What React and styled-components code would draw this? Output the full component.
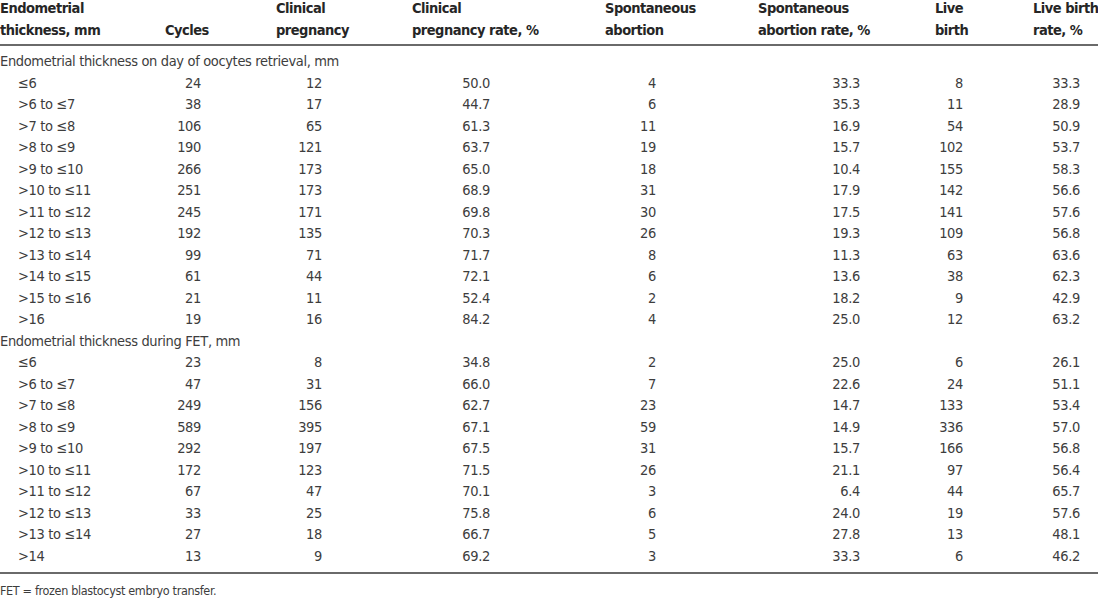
import React from "react";
import styled, { createGlobalStyle } from "styled-components";

const Global = createGlobalStyle`
  html, body { margin: 0; padding: 0; background: #fff; }
  body { font-family: "Liberation Sans Narrow", "DejaVu Sans Condensed", "Liberation Sans", sans-serif; overflow: hidden; }
`;

const COLS = "165px 111px 136px 193px 153px 177px 98px 65px";
const PADS = [75, 90, 115, 102, 75, 70, 18];

const Page = styled.div`
  width: 1098px;
  height: 600px;
  overflow: hidden;
`;

const Table = styled.div`
  margin-top: -3px;
  border-bottom: 2px solid #6a6a6a;
  padding-bottom: 5px;
`;

const HeadRow = styled.div`
  display: grid;
  grid-template-columns: ${COLS};
  align-items: end;
  border-bottom: 2px solid #6a6a6a;
  padding-bottom: 3px;
  margin-bottom: 5px;
`;

const HeadCell = styled.div`
  font-size: 14.5px;
  letter-spacing: -0.5px;
  font-weight: bold;
  line-height: 22px;
  color: #262626;
  white-space: nowrap;
`;

const Row = styled.div`
  display: grid;
  grid-template-columns: ${COLS};
  height: 21.5px;
  line-height: 21.5px;
  font-size: 14.5px;
  letter-spacing: -0.35px;
  color: #3d3d3d;
`;

const Section = styled.div`
  grid-column: 1 / -1;
  white-space: nowrap;
`;

const Label = styled.div`
  padding-left: 18px;
  white-space: nowrap;
`;

const Num = styled.div`
  text-align: right;
  padding-right: ${(p) => p.$pad}px;
  white-space: nowrap;
`;

const Note = styled.div`
  font-size: 12.5px;
  letter-spacing: -0.35px;
  color: #3d3d3d;
  margin-top: 9px;
  line-height: 16px;
`;

const headers = [
  ["Endometrial", "thickness, mm"],
  ["", "Cycles"],
  ["Clinical", "pregnancy"],
  ["Clinical", "pregnancy rate, %"],
  ["Spontaneous", "abortion"],
  ["Spontaneous", "abortion rate, %"],
  ["Live", "birth"],
  ["Live birth", "rate, %"],
];

const sections = [
  {
    title: "Endometrial thickness on day of oocytes retrieval, mm",
    rows: [
      ["≤6", 24, 12, "50.0", 4, "33.3", 8, "33.3"],
      [">6 to ≤7", 38, 17, "44.7", 6, "35.3", 11, "28.9"],
      [">7 to ≤8", 106, 65, "61.3", 11, "16.9", 54, "50.9"],
      [">8 to ≤9", 190, 121, "63.7", 19, "15.7", 102, "53.7"],
      [">9 to ≤10", 266, 173, "65.0", 18, "10.4", 155, "58.3"],
      [">10 to ≤11", 251, 173, "68.9", 31, "17.9", 142, "56.6"],
      [">11 to ≤12", 245, 171, "69.8", 30, "17.5", 141, "57.6"],
      [">12 to ≤13", 192, 135, "70.3", 26, "19.3", 109, "56.8"],
      [">13 to ≤14", 99, 71, "71.7", 8, "11.3", 63, "63.6"],
      [">14 to ≤15", 61, 44, "72.1", 6, "13.6", 38, "62.3"],
      [">15 to ≤16", 21, 11, "52.4", 2, "18.2", 9, "42.9"],
      [">16", 19, 16, "84.2", 4, "25.0", 12, "63.2"],
    ],
  },
  {
    title: "Endometrial thickness during FET, mm",
    rows: [
      ["≤6", 23, 8, "34.8", 2, "25.0", 6, "26.1"],
      [">6 to ≤7", 47, 31, "66.0", 7, "22.6", 24, "51.1"],
      [">7 to ≤8", 249, 156, "62.7", 23, "14.7", 133, "53.4"],
      [">8 to ≤9", 589, 395, "67.1", 59, "14.9", 336, "57.0"],
      [">9 to ≤10", 292, 197, "67.5", 31, "15.7", 166, "56.8"],
      [">10 to ≤11", 172, 123, "71.5", 26, "21.1", 97, "56.4"],
      [">11 to ≤12", 67, 47, "70.1", 3, "6.4", 44, "65.7"],
      [">12 to ≤13", 33, 25, "75.8", 6, "24.0", 19, "57.6"],
      [">13 to ≤14", 27, 18, "66.7", 5, "27.8", 13, "48.1"],
      [">14", 13, 9, "69.2", 3, "33.3", 6, "46.2"],
    ],
  },
];

export default function App() {
  return (
    <Page>
      <Global />
      <Table>
        <HeadRow>
          {headers.map((h, i) => (
            <HeadCell key={i}>
              {h[0] && <div>{h[0]}</div>}
              <div>{h[1]}</div>
            </HeadCell>
          ))}
        </HeadRow>
        {sections.map((s) => (
          <React.Fragment key={s.title}>
            <Row>
              <Section>{s.title}</Section>
            </Row>
            {s.rows.map((r) => (
              <Row key={r[0]}>
                <Label>{r[0]}</Label>
                {r.slice(1).map((v, j) => (
                  <Num key={j} $pad={PADS[j]}>
                    {v}
                  </Num>
                ))}
              </Row>
            ))}
          </React.Fragment>
        ))}
      </Table>
      <Note>FET = frozen blastocyst embryo transfer.</Note>
    </Page>
  );
}
